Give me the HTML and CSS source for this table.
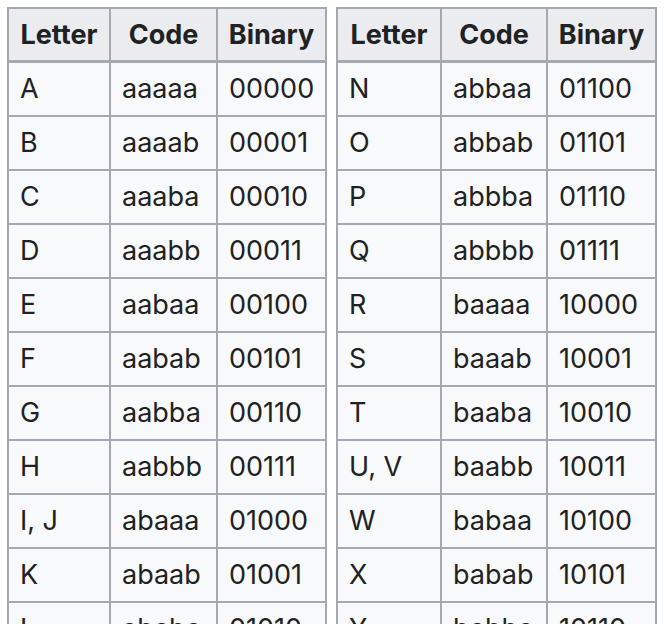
FILE: index.html
```html
<!DOCTYPE html>
<html lang="en">
<head>
<meta charset="utf-8">
<title>Baconian cipher</title>
<link rel="stylesheet" href="styles.css">
</head>
<body>
<div class="wrap">
  <div class="tbl tbl-left">
    <div class="th">Letter</div><div class="th">Code</div><div class="th">Binary</div>
    <div class="td">A</div><div class="td">aaaaa</div><div class="td">00000</div>
    <div class="td">B</div><div class="td">aaaab</div><div class="td">00001</div>
    <div class="td">C</div><div class="td">aaaba</div><div class="td">00010</div>
    <div class="td">D</div><div class="td">aaabb</div><div class="td">00011</div>
    <div class="td">E</div><div class="td">aabaa</div><div class="td">00100</div>
    <div class="td">F</div><div class="td">aabab</div><div class="td">00101</div>
    <div class="td">G</div><div class="td">aabba</div><div class="td">00110</div>
    <div class="td">H</div><div class="td">aabbb</div><div class="td">00111</div>
    <div class="td">I, J</div><div class="td">abaaa</div><div class="td">01000</div>
    <div class="td">K</div><div class="td">abaab</div><div class="td">01001</div>
    <div class="td">L</div><div class="td">ababa</div><div class="td">01010</div>
  </div>
  <div class="tbl tbl-right">
    <div class="th">Letter</div><div class="th">Code</div><div class="th">Binary</div>
    <div class="td">N</div><div class="td">abbaa</div><div class="td">01100</div>
    <div class="td">O</div><div class="td">abbab</div><div class="td">01101</div>
    <div class="td">P</div><div class="td">abbba</div><div class="td">01110</div>
    <div class="td">Q</div><div class="td">abbbb</div><div class="td">01111</div>
    <div class="td">R</div><div class="td">baaaa</div><div class="td">10000</div>
    <div class="td">S</div><div class="td">baaab</div><div class="td">10001</div>
    <div class="td">T</div><div class="td">baaba</div><div class="td">10010</div>
    <div class="td">U, V</div><div class="td">baabb</div><div class="td">10011</div>
    <div class="td">W</div><div class="td">babaa</div><div class="td">10100</div>
    <div class="td">X</div><div class="td">babab</div><div class="td">10101</div>
    <div class="td">Y</div><div class="td">babba</div><div class="td">10110</div>
  </div>
</div>
</body>
</html>
```
FILE: styles.css
```css
html, body {
  margin: 0;
  padding: 0;
  background: #ffffff;
  height: 624px;
  overflow: hidden;
}
body {
  font-family: Inter, "Noto Sans", "Liberation Sans", sans-serif;
  color: #202122;
}
.wrap {
  display: flex;
  align-items: flex-start;
  gap: 9px;
  padding: 7px 0 0 7px;
}
.tbl {
  display: grid;
  grid-auto-rows: 52px;
  gap: 2px;
  padding: 2px;
  background: #a2a9b1;
}
.tbl-left {
  grid-template-columns: 100px 105px 107px;
}
.tbl-right {
  grid-template-columns: 102px 104px 107px;
}
.th {
  background: #eaecf0;
  font-weight: 700;
  font-size: 27px;
  display: flex;
  align-items: center;
  justify-content: center;
  height: 51px;
  box-sizing: border-box;
}
.td {
  background: #f8f9fa;
  font-size: 27px;
  display: flex;
  align-items: center;
  padding: 0 10px 2px 11px;
}
```
